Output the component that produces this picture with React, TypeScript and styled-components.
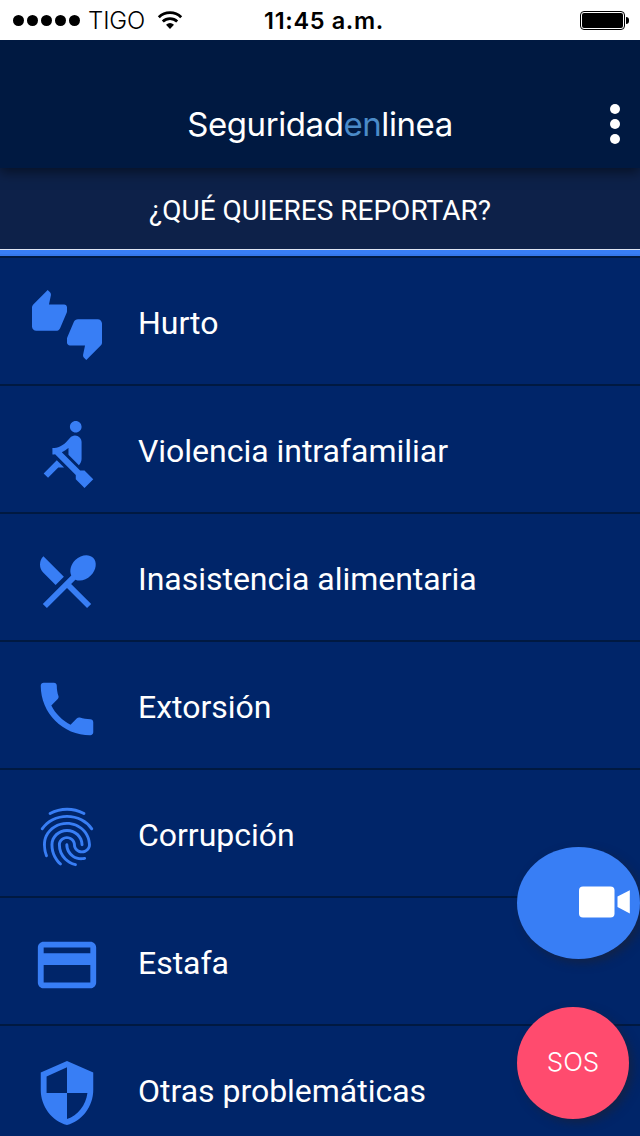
import React from "react";
import styled, { createGlobalStyle } from "styled-components";
import {
  MdFingerprint,
  MdPayment,
  MdPhone,
  MdRestaurantMenu,
  MdRowing,
  MdSecurity,
  MdThumbsUpDown,
} from "react-icons/md";
import type { IconType } from "react-icons";

const GlobalStyle = createGlobalStyle`
  *, *::before, *::after { box-sizing: border-box; }
  body { margin: 0; background: #002569; -webkit-font-smoothing: antialiased; }
`;

const Screen = styled.div`
  position: relative;
  display: flex;
  flex-direction: column;
  width: 640px;
  height: 1136px;
  overflow: hidden;
  background: #002569;
  color: #fff;
  font-family: Roboto, sans-serif;
`;

const StatusBar = styled.div`
  position: relative;
  z-index: 2;
  display: grid;
  grid-template-columns: 1fr auto 1fr;
  align-items: center;
  flex: none;
  height: 40px;
  padding: 0 11px 0 13px;
  background: #fff;
  color: #000;
  font-family: Inter, sans-serif;
`;

const Carrier = styled.div`
  display: flex;
  align-items: center;
`;

const SignalDots = styled.div`
  display: flex;
  gap: 3px;
  margin-right: 8px;
`;

const SignalDot = styled.span`
  width: 11px;
  height: 11px;
  border-radius: 50%;
  background: #000;
`;

const CarrierName = styled.span`
  width: 58px;
  margin-right: 11px;
  font-size: 24px;
  font-weight: 350;
  line-height: 40px;
  letter-spacing: -0.1px;
  white-space: nowrap;
`;

const Clock = styled.time`
  padding-left: 6px;
  font-size: 23.5px;
  font-weight: 600;
  line-height: 41px;
  letter-spacing: 0.65px;
`;

const Battery = styled.div`
  display: flex;
  align-items: center;
  justify-self: end;
  gap: 1px;
`;

const BatteryCase = styled.div`
  width: 45px;
  height: 19px;
  padding: 1px;
  border: 1px solid #000;
  border-radius: 4px;
`;

const BatteryCharge = styled.div`
  height: 100%;
  border-radius: 2px;
  background: #000;
`;

const BatteryTip = styled.div`
  width: 3px;
  height: 7px;
  border-radius: 0 3px 3px 0;
  background: #000;
`;

const Header = styled.header`
  position: relative;
  z-index: 1;
  display: grid;
  grid-template-columns: 60px 1fr 60px;
  align-items: center;
  flex: none;
  height: 128px;
  padding-top: 40px;
  background: #001941;
  box-shadow: 0 4px 12px rgba(0, 0, 0, 0.5);
`;

const Title = styled.h1`
  margin: 0;
  font-family: Inter, sans-serif;
  font-size: 33px;
  font-weight: 400;
  line-height: 40px;
  letter-spacing: -0.42px;
  text-align: center;
`;

const TitleAccent = styled.span`
  color: #4b8bc8;
`;

const MenuButton = styled.button`
  display: flex;
  flex-direction: column;
  align-items: center;
  gap: 5px;
  width: 30px;
  margin-left: 20px;
  padding: 0;
  border: 0;
  background: none;
`;

const MenuDot = styled.span`
  width: 10px;
  height: 10px;
  border-radius: 50%;
  background: #fff;
`;

const Question = styled.h2`
  flex: none;
  height: 82px;
  margin: 0;
  border-bottom: 1px solid #dfe5f2;
  background: #0d2149;
  font-size: 28px;
  font-weight: 400;
  line-height: 85px;
  text-align: center;
`;

const Accent = styled.div`
  flex: none;
  height: 6px;
  border-bottom: 2px solid #3578eb;
  background: #387ef5;
`;

const ReportList = styled.ul`
  flex: none;
  margin: 0;
  padding: 0;
  list-style: none;
`;

const ReportItem = styled.li`
  display: flex;
  align-items: center;
  height: 128px;
  padding: 8px 32px 0;
  gap: 36px;
  border-top: 2px solid #001941;
  color: #387ef5;
`;

const ReportLabel = styled.span`
  margin-top: -4px;
  color: #fff;
  font-size: 32px;
  line-height: 40px;
  letter-spacing: -0.02px;
`;

const FloatingButton = styled.button<{ $top: number; $width: number; $color: string }>`
  position: absolute;
  top: ${(p) => p.$top}px;
  left: 517px;
  display: flex;
  align-items: center;
  justify-content: center;
  width: ${(p) => p.$width}px;
  height: 112px;
  padding: 0 0 3px;
  border: 0;
  border-radius: 50%;
  background: ${(p) => p.$color};
  color: #fff;
  font-family: Inter, sans-serif;
  font-size: 26px;
  font-weight: 350;
  box-shadow: 4px 4px 10px rgba(26, 34, 56, 0.65);
`;

const CameraIcon = styled.svg`
  margin-left: 53px;
`;

const reports: { label: string; icon: IconType }[] = [
  { label: "Hurto", icon: MdThumbsUpDown },
  { label: "Violencia intrafamiliar", icon: MdRowing },
  { label: "Inasistencia alimentaria", icon: MdRestaurantMenu },
  { label: "Extorsión", icon: MdPhone },
  { label: "Corrupción", icon: MdFingerprint },
  { label: "Estafa", icon: MdPayment },
  { label: "Otras problemáticas", icon: MdSecurity },
];

function WifiIcon() {
  return (
    <svg width="26" height="22" viewBox="0 0 26 22" fill="none" stroke="#000" strokeWidth="2.8">
      <path d="M1.8 7.2 A16 16 0 0 1 24.2 7.2" />
      <path d="M5.8 11.5 A10.4 10.4 0 0 1 20.2 11.5" />
      <path d="M13 18.9 L9 14.7 A6.1 6.1 0 0 1 17 14.7 Z" fill="#000" stroke="none" />
    </svg>
  );
}

export default function App() {
  return (
    <Screen>
      <GlobalStyle />
      <StatusBar>
        <Carrier>
          <SignalDots>
            {[0, 1, 2, 3, 4].map((dot) => (
              <SignalDot key={dot} />
            ))}
          </SignalDots>
          <CarrierName>TIGO</CarrierName>
          <WifiIcon />
        </Carrier>
        <Clock>11:45 a.m.</Clock>
        <Battery>
          <BatteryCase>
            <BatteryCharge />
          </BatteryCase>
          <BatteryTip />
        </Battery>
      </StatusBar>
      <Header>
        <span />
        <Title>
          Seguridad<TitleAccent>en</TitleAccent>linea
        </Title>
        <MenuButton aria-label="Menú">
          <MenuDot />
          <MenuDot />
          <MenuDot />
        </MenuButton>
      </Header>
      <Question>¿QUÉ QUIERES REPORTAR?</Question>
      <Accent />
      <ReportList>
        {reports.map(({ label, icon: Icon }) => (
          <ReportItem key={label}>
            <Icon size={70} />
            <ReportLabel>{label}</ReportLabel>
          </ReportItem>
        ))}
      </ReportList>
      <FloatingButton $top={847} $width={123} $color="#387ef5" aria-label="Video">
        <CameraIcon width="52" height="32" viewBox="0 0 52 32" fill="#fff">
          <rect x="0" y="0.5" width="35.5" height="31" rx="4" />
          <path d="M38.5 10.5 50.8 4.3v23.2L38.5 21Z" />
        </CameraIcon>
      </FloatingButton>
      <FloatingButton $top={1007} $width={112} $color="#ff4b6e">
        SOS
      </FloatingButton>
    </Screen>
  );
}
